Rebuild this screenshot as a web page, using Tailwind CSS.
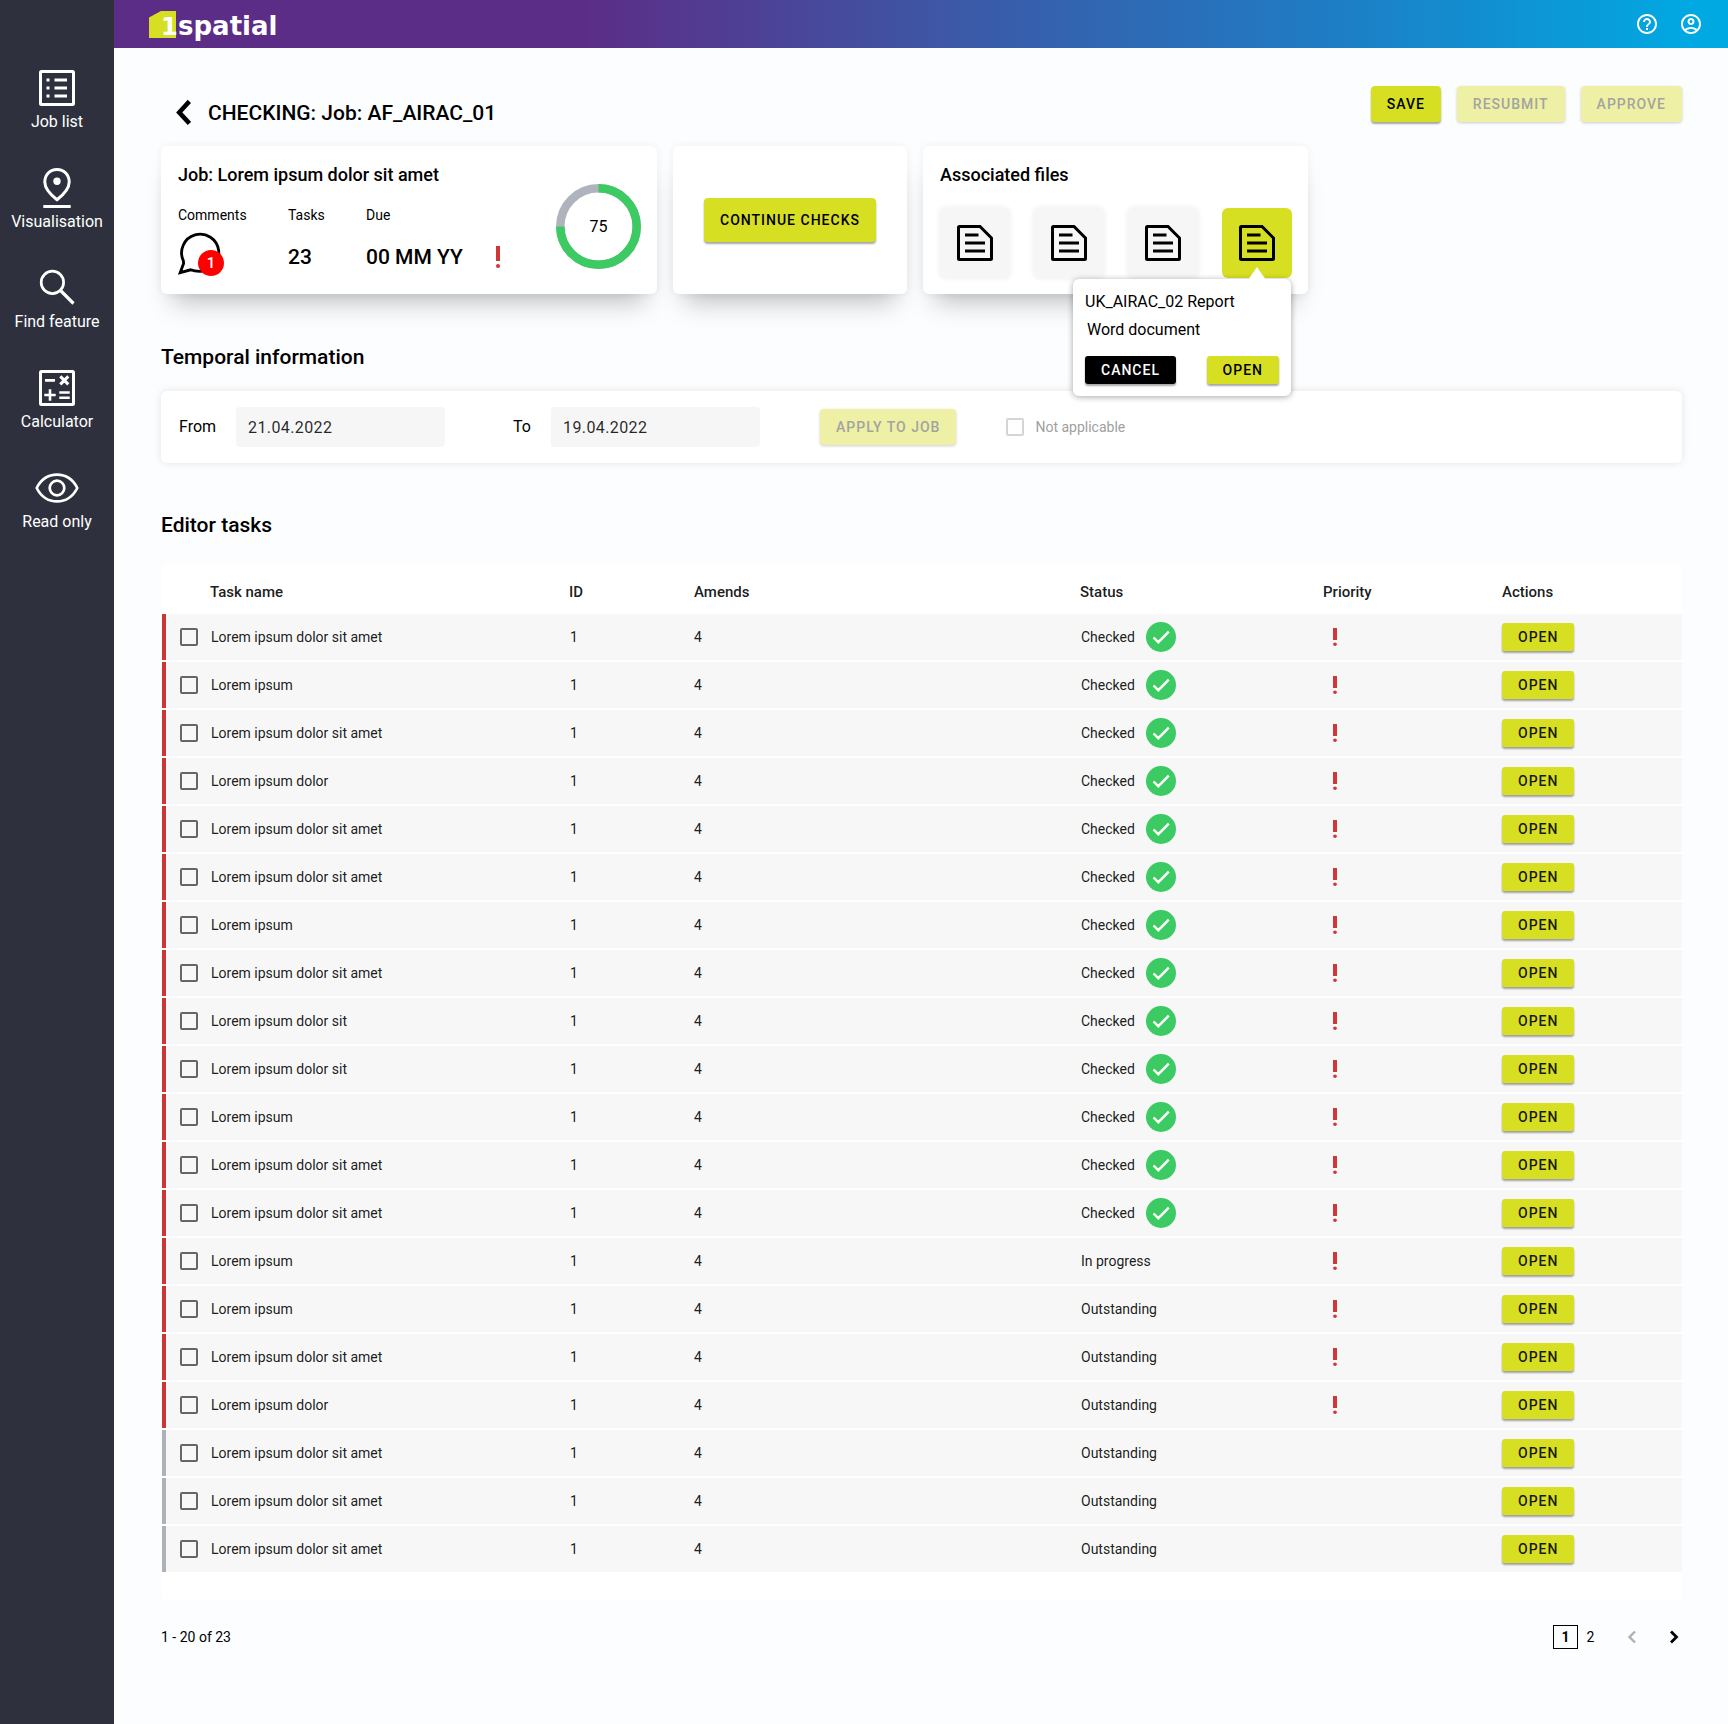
<!DOCTYPE html>
<html lang="en">
<head>
    <meta charset="UTF-8">
    <meta name="viewport" content="width=device-width, initial-scale=1.0">
    <title>1spatial - Checking job</title>
    <script src="https://cdn.jsdelivr.net/npm/@tailwindcss/browser@4"></script>
</head>
<body class="bg-[#fcfdff] font-[Roboto,sans-serif] text-black flex min-h-screen">
    <!-- Sidebar -->
    <nav class="w-[114px] shrink-0 bg-[#2e313d] text-white pt-16 flex flex-col gap-8 text-base leading-5">
        <a href="#" class="flex flex-col items-center">
            <svg class="size-12" viewBox="0 0 48 48" fill="none" stroke="currentColor" stroke-width="3">
                <rect x="7.5" y="7.5" width="33" height="33" rx="1"/>
                <path d="M21.5 16H34M21.5 24H34M21.5 32H34"/>
                <path d="M13.5 16h3M13.5 24h3M13.5 32h3"/>
            </svg>
            Job list
        </a>
        <a href="#" class="flex flex-col items-center">
            <svg class="size-12" viewBox="0 0 48 48" fill="none" stroke="currentColor" stroke-width="3">
                <path d="M24 5.5C17 5.5 11.8 10.8 11.8 18C11.8 24 16 29.5 24 35.7C32 29.5 36.2 24 36.2 18C36.2 10.8 31 5.5 24 5.5Z"/>
                <circle cx="24" cy="17.3" r="3.7" fill="currentColor" stroke="none"/>
                <path d="M10.3 42.5H37.7"/>
            </svg>
            Visualisation
        </a>
        <a href="#" class="flex flex-col items-center">
            <svg class="size-12" viewBox="0 0 48 48" fill="none" stroke="currentColor" stroke-width="2.7">
                <circle cx="19.4" cy="18.4" r="11.2"/>
                <path d="M27.5 26.5L40.5 39.5" stroke-width="3.2"/>
            </svg>
            Find feature
        </a>
        <a href="#" class="flex flex-col items-center">
            <svg class="size-12" viewBox="0 0 48 48" fill="none" stroke="currentColor" stroke-width="3">
                <rect x="7.5" y="7.5" width="33" height="33" rx="1"/>
                <path d="M12 16.4H22M11.3 31H22.7M17 25.3V36.7M26.3 28.5H36.7M26.3 33.7H36.7" stroke-width="2.6"/>
                <path d="M27.3 12.4L35.3 20.4M35.3 12.4L27.3 20.4"/>
            </svg>
            Calculator
        </a>
        <a href="#" class="flex flex-col items-center">
            <svg class="size-12" viewBox="0 0 48 48" fill="none" stroke="currentColor" stroke-width="2.7">
                <path d="M3.7 24C8 15.5 15.5 10.7 24 10.7S40 15.5 44.3 24C40 32.5 32.5 37.4 24 37.4S8 32.5 3.7 24Z" stroke-linejoin="round"/>
                <circle cx="24" cy="24" r="7.3"/>
            </svg>
            Read only
        </a>
    </nav>

    <div class="flex-1 min-w-0">
        <!-- Top bar -->
        <header class="h-12 pl-[35px] pr-[25px] flex items-center justify-between text-white bg-[linear-gradient(90deg,#5c2d87_29%,#3b5aa8_53%,#1f7cc4_75%,#00a9e2_98%)]">
            <a href="#" class="relative flex items-start" aria-label="1spatial">
                <svg class="w-[27px] h-[27px]" viewBox="0 0 27 27">
                    <path d="M0 6.5L12 0H27V27H0Z" fill="#d7df23"/>
                </svg>
                <span class="absolute left-3 top-0 text-2xl leading-[33px] font-bold font-['DejaVu_Sans']">1</span>
                <span class="pl-0.5 text-[26px] leading-[31px] h-[27px] font-bold font-['DejaVu_Sans']">spatial</span>
            </a>
            <div class="flex gap-5">
                <button aria-label="Help">
                    <svg class="size-6" viewBox="0 0 24 24" fill="currentColor"><path d="M11 18h2v-2h-2v2zm1-16C6.48 2 2 6.48 2 12s4.48 10 10 10 10-4.48 10-10S17.52 2 12 2zm0 18c-4.41 0-8-3.59-8-8s3.59-8 8-8 8 3.59 8 8-3.59 8-8 8zm0-14c-2.21 0-4 1.79-4 4h2c0-1.1.9-2 2-2s2 .9 2 2c0 2-3 1.75-3 5h2c0-2.25 3-2.5 3-5 0-2.21-1.79-4-4-4z"/></svg>
                </button>
                <button aria-label="Account">
                    <svg class="size-6" viewBox="0 0 24 24" fill="currentColor"><path d="M12 2C6.48 2 2 6.48 2 12s4.48 10 10 10 10-4.48 10-10S17.52 2 12 2zM7.35 18.5C8.66 17.56 10.26 17 12 17s3.34.56 4.65 1.5C15.34 19.44 13.74 20 12 20s-3.34-.56-4.65-1.5zm10.79-1.38C16.45 15.8 14.32 15 12 15s-4.45.8-6.14 2.12C4.7 15.73 4 13.95 4 12c0-4.42 3.58-8 8-8s8 3.58 8 8c0 1.95-.7 3.73-1.86 5.12zM12 6c-1.93 0-3.5 1.57-3.5 3.5S10.07 13 12 13s3.5-1.57 3.5-3.5S13.93 6 12 6zm0 5c-.83 0-1.5-.67-1.5-1.5S11.17 8 12 8s1.5.67 1.5 1.5S12.83 11 12 11z"/></svg>
                </button>
            </div>
        </header>

        <main class="pl-[47px] pr-[46px] pt-[38px]">
            <!-- Title and job actions -->
            <div class="h-[60px] flex items-start justify-between">
                <div class="pt-[13px] pl-[15px] flex items-center gap-[17px]">
                    <button aria-label="Back">
                        <svg class="w-[15px] h-7" viewBox="0 0 15 28" fill="none" stroke="currentColor" stroke-width="4.5"><path d="M13.4 2.4L3.2 13.4L13.4 24.4"/></svg>
                    </button>
                    <h1 class="text-[21px] leading-7 font-medium">CHECKING: Job: AF_AIRAC_01</h1>
                </div>
                <div class="flex gap-4 text-sm font-medium tracking-[1px]">
                    <button class="h-9 px-4 rounded bg-[#d7df23] shadow-[0_2px_2px_rgba(0,0,0,0.35)]">SAVE</button>
                    <button disabled class="h-9 px-4 rounded bg-[#eef1a5] text-[#a3a3a0] shadow-[0_1px_3px_rgba(0,0,0,0.2)]">RESUBMIT</button>
                    <button disabled class="h-9 px-4 rounded bg-[#eef1a5] text-[#a3a3a0] shadow-[0_1px_3px_rgba(0,0,0,0.2)]">APPROVE</button>
                </div>
            </div>

            <!-- Summary cards -->
            <div class="flex gap-4">
                <section class="w-[496px] h-[148px] pl-[17px] pr-4 pt-[17px] flex justify-between bg-white rounded-md shadow-[0_0_8px_rgba(0,0,0,0.06),0_20px_24px_-12px_rgba(0,0,0,0.25)]">
                    <div>
                        <h2 class="text-lg leading-6 font-medium">Job: Lorem ipsum dolor sit amet</h2>
                        <div class="mt-[18px] flex text-sm leading-5">
                            <div class="w-[110px]">
                                <p>Comments</p>
                                <div class="relative mt-[7px]">
                                    <svg class="size-11" viewBox="0 0 44 44" fill="none" stroke="currentColor" stroke-width="2.8"><path d="M5.4 28.8A18.6 18.6 0 1 1 21.5 39.4C18.5 39.4 16 39.2 12.6 37.8L2.2 40.6L5.6 31.6Z"/></svg>
                                    <span class="absolute left-5 top-[18px] size-[26px] rounded-full bg-[#ff0000] text-white text-[15px] leading-[26px] text-center font-medium">1</span>
                                </div>
                            </div>
                            <div class="w-[78px]">
                                <p>Tasks</p>
                                <p class="mt-[18px] text-[21px] leading-7 font-medium">23</p>
                            </div>
                            <div>
                                <p>Due</p>
                                <div class="mt-[18px] flex items-center gap-[33px]">
                                    <p class="text-[21px] leading-7 font-medium">00 MM YY</p>
                                    <svg class="w-1 h-[22px]" viewBox="0 0 4 22" fill="#cf3639"><path d="M0 0H4V15H0Z"/><circle cx="2" cy="20" r="2"/></svg>
                                </div>
                            </div>
                        </div>
                    </div>
                    <div class="relative mt-[21px] size-[85px]">
                        <svg class="size-[85px] -rotate-90" viewBox="0 0 85 85" fill="none" stroke-width="8.5">
                            <circle cx="42.5" cy="42.5" r="38.2" stroke="#aeb3bc"/>
                            <circle cx="42.5" cy="42.5" r="38.2" stroke="#3ccb63" pathLength="100" stroke-dasharray="75 25"/>
                        </svg>
                        <span class="absolute inset-0 flex items-center justify-center text-base">75</span>
                    </div>
                </section>

                <section class="w-[234px] h-[148px] flex items-center justify-center bg-white rounded-md shadow-[0_0_8px_rgba(0,0,0,0.06),0_20px_24px_-12px_rgba(0,0,0,0.25)]">
                    <button class="h-11 px-4 rounded bg-[#d7df23] text-sm font-medium tracking-[1px] shadow-[0_2px_2px_rgba(0,0,0,0.35)]">CONTINUE CHECKS</button>
                </section>

                <section class="w-[385px] h-[148px] pl-[17px] pr-4 pt-[17px] bg-white rounded-md shadow-[0_0_8px_rgba(0,0,0,0.06),0_20px_24px_-12px_rgba(0,0,0,0.25)]">
                    <h2 class="text-lg leading-6 font-medium">Associated files</h2>
                    <div class="mt-[21px] flex justify-between">
                        <button aria-label="File 1" class="size-[70px] flex items-center justify-center rounded-md bg-[#f6f6f6] shadow-[0_0_5px_1px_rgba(0,0,0,0.06)]">
                            <svg class="size-12" viewBox="0 0 48 48" fill="none" stroke="currentColor" stroke-width="3"><path d="M8.5 7.5H29L40.5 19V39.5Q40.5 40.5 39.5 40.5H8.5Q7.5 40.5 7.5 39.5V8.5Q7.5 7.5 8.5 7.5ZM14 16H27.5M14 24H34M14 32H34"/></svg>
                        </button>
                        <button aria-label="File 2" class="size-[70px] flex items-center justify-center rounded-md bg-[#f6f6f6] shadow-[0_0_5px_1px_rgba(0,0,0,0.06)]">
                            <svg class="size-12" viewBox="0 0 48 48" fill="none" stroke="currentColor" stroke-width="3"><path d="M8.5 7.5H29L40.5 19V39.5Q40.5 40.5 39.5 40.5H8.5Q7.5 40.5 7.5 39.5V8.5Q7.5 7.5 8.5 7.5ZM14 16H27.5M14 24H34M14 32H34"/></svg>
                        </button>
                        <button aria-label="File 3" class="size-[70px] flex items-center justify-center rounded-md bg-[#f6f6f6] shadow-[0_0_5px_1px_rgba(0,0,0,0.06)]">
                            <svg class="size-12" viewBox="0 0 48 48" fill="none" stroke="currentColor" stroke-width="3"><path d="M8.5 7.5H29L40.5 19V39.5Q40.5 40.5 39.5 40.5H8.5Q7.5 40.5 7.5 39.5V8.5Q7.5 7.5 8.5 7.5ZM14 16H27.5M14 24H34M14 32H34"/></svg>
                        </button>
                        <div class="relative">
                            <button aria-label="File 4" class="size-[70px] flex items-center justify-center rounded-md bg-[#d7df23]">
                                <svg class="size-12" viewBox="0 0 48 48" fill="none" stroke="currentColor" stroke-width="3"><path d="M8.5 7.5H29L40.5 19V39.5Q40.5 40.5 39.5 40.5H8.5Q7.5 40.5 7.5 39.5V8.5Q7.5 7.5 8.5 7.5ZM14 16H27.5M14 24H34M14 32H34"/></svg>
                            </button>
                            <!-- File popover -->
                            <div class="absolute z-10 right-px top-[71px] w-[218px] px-3 pt-[13px] pb-3 bg-white rounded-md text-base leading-5 shadow-[0_1px_6px_rgba(0,0,0,0.35)]">
                                <svg class="absolute right-[25px] -top-3 w-[18px] h-[13px]" viewBox="0 0 18 13" fill="#fff"><path d="M0 13L9 0L18 13Z"/></svg>
                                <p>UK_AIRAC_02 Report</p>
                                <p class="mt-2 pl-0.5">Word document</p>
                                <div class="mt-4 flex justify-between text-sm font-medium tracking-[1px]">
                                    <button class="h-7 px-4 rounded-[3px] bg-black text-white shadow-[0_2px_2px_rgba(0,0,0,0.35)]">CANCEL</button>
                                    <button class="h-7 px-4 rounded-[3px] bg-[#d7df23] shadow-[0_2px_2px_rgba(0,0,0,0.35)]">OPEN</button>
                                </div>
                            </div>
                        </div>
                    </div>
                </section>
            </div>

            <!-- Temporal information -->
            <h2 class="mt-[49px] text-[21px] leading-7 font-medium">Temporal information</h2>
            <section class="mt-5 h-[72px] px-[18px] flex items-center bg-white rounded-md shadow-[0_0_8px_rgba(0,0,0,0.1)]">
                <label for="from" class="w-[57px] text-base">From</label>
                <input id="from" type="text" value="21.04.2022" class="w-[209px] h-10 px-3 rounded bg-[#f6f6f6] text-base tracking-wide text-black/85">
                <label for="to" class="ml-[68px] w-[38px] text-base">To</label>
                <input id="to" type="text" value="19.04.2022" class="w-[209px] h-10 px-3 rounded bg-[#f6f6f6] text-base tracking-wide text-black/85">
                <button disabled class="ml-[60px] h-9 px-4 rounded bg-[#eef1a5] text-[#a3a3a0] text-sm font-medium tracking-[1px] shadow-[0_1px_3px_rgba(0,0,0,0.2)]">APPLY TO JOB</button>
                <label class="ml-[50px] flex items-center gap-[11px] text-sm text-[#a0a0a0]">
                    <input type="checkbox" disabled class="appearance-none size-[18px] border-2 border-[#d5d5d5] rounded-xs">
                    Not applicable
                </label>
            </section>

            <!-- Editor tasks -->
            <h2 class="mt-12 text-[21px] leading-7 font-medium">Editor tasks</h2>
            <div class="ml-px mt-[26px] pb-[27px] bg-white rounded-md">
                <table class="w-full table-fixed border-separate border-spacing-x-0 border-spacing-y-0.5 text-sm text-left text-black/90">
                    <thead class="text-[15px]">
                        <tr class="h-[45px]">
                            <th class="w-[48px]"></th>
                            <th class="w-[359px] pt-1.5 font-medium">Task name</th>
                            <th class="w-[125px] pt-1.5 font-medium">ID</th>
                            <th class="w-[386px] pt-1.5 font-medium">Amends</th>
                            <th class="w-[243px] pt-1.5 font-medium">Status</th>
                            <th class="w-[179px] pt-1.5 font-medium">Priority</th>
                            <th class="w-[180px] pt-1.5 font-medium">Actions</th>
                        </tr>
                    </thead>
                    <tbody id="tasks"></tbody>
                </table>
            </div>

            <!-- Pagination -->
            <div class="mt-6 flex items-center justify-between text-sm">
                <p>1 - 20 of 23</p>
                <div class="flex items-center">
                    <a href="#" class="w-[25px] h-6 border border-black flex items-center justify-center font-bold">1</a>
                    <a href="#" class="w-[25px] text-center">2</a>
                    <button aria-label="Previous page" disabled class="ml-6 text-[#adb0b7]">
                        <svg class="w-2.5 h-3.5" viewBox="0 0 10 14" fill="none" stroke="currentColor" stroke-width="2.4"><path d="M8 1.5L2.5 7L8 12.5"/></svg>
                    </button>
                    <button aria-label="Next page" class="ml-8 mr-[3px]">
                        <svg class="w-2.5 h-3.5" viewBox="0 0 10 14" fill="none" stroke="currentColor" stroke-width="2.8"><path d="M2 1.5L7.5 7L2 12.5"/></svg>
                    </button>
                </div>
            </div>
        </main>
    </div>

    <script>
        const names = [
            'Lorem ipsum dolor sit amet', 'Lorem ipsum', 'Lorem ipsum dolor sit amet', 'Lorem ipsum dolor',
            'Lorem ipsum dolor sit amet', 'Lorem ipsum dolor sit amet', 'Lorem ipsum', 'Lorem ipsum dolor sit amet',
            'Lorem ipsum dolor sit', 'Lorem ipsum dolor sit', 'Lorem ipsum', 'Lorem ipsum dolor sit amet',
            'Lorem ipsum dolor sit amet', 'Lorem ipsum', 'Lorem ipsum', 'Lorem ipsum dolor sit amet',
            'Lorem ipsum dolor', 'Lorem ipsum dolor sit amet', 'Lorem ipsum dolor sit amet', 'Lorem ipsum dolor sit amet'
        ];
        const check = '<svg class="size-[30px]" viewBox="0 0 30 30"><circle cx="15" cy="15" r="15" fill="#3ccb63"/><path d="M7.5 15.5L12.3 20.2L22.8 9.7" fill="none" stroke="#fff" stroke-width="2.4"/></svg>';
        const alertMark = '<svg class="ml-2.5 w-1 h-[18px]" viewBox="0 0 4 18" fill="#cf3639"><path d="M0 0H4V12H0Z"/><circle cx="2" cy="16.2" r="1.8"/></svg>';

        document.getElementById('tasks').innerHTML = names.map((name, i) => {
            const status = i < 13 ? 'Checked' : i === 13 ? 'In progress' : 'Outstanding';
            const urgent = i < 17;
            return `
                <tr class="h-[46px] bg-[#f7f7f7]">
                    <td class="border-l-4 ${urgent ? 'border-[#cb3639]' : 'border-[#adb1ba]'} pl-3.5">
                        <input id="task-${i}" type="checkbox" class="block appearance-none size-[18px] border-2 border-[#666666] rounded-xs">
                    </td>
                    <td class="pl-px"><label for="task-${i}">${name}</label></td>
                    <td class="pl-px">1</td>
                    <td>4</td>
                    <td class="pl-px"><div class="flex items-center gap-[11px]">${status}${i < 13 ? check : ''}</div></td>
                    <td>${urgent ? alertMark : ''}</td>
                    <td><button class="block h-7 px-4 rounded-[3px] bg-[#d7df23] font-medium tracking-[1px] shadow-[0_2px_2px_rgba(0,0,0,0.35)]">OPEN</button></td>
                </tr>`;
        }).join('');
    </script>
</body>
</html>
